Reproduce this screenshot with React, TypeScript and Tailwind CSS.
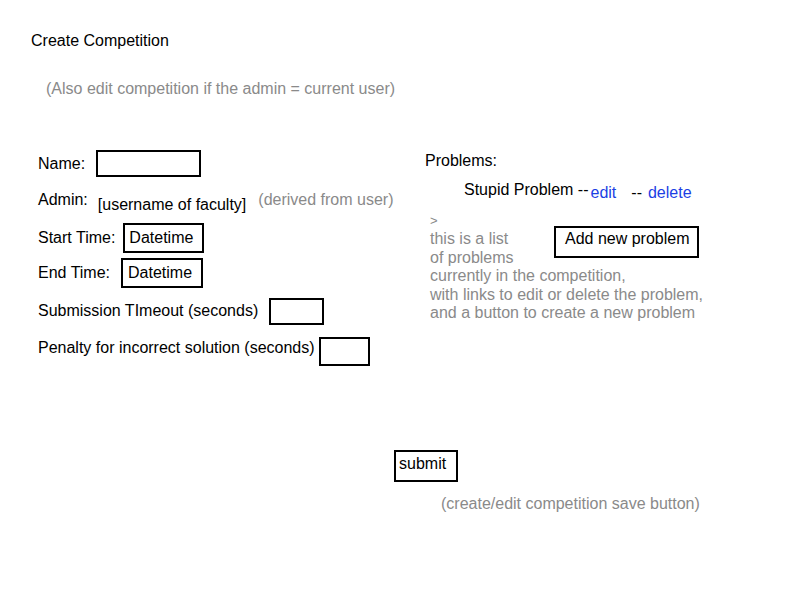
import React from "react";

function Box({ className = "", children }: { className?: string; children?: React.ReactNode }) {
  return <div className={`border-2 border-black shrink-0 ${className}`}>{children}</div>;
}

export default function App() {
  return (
    <div
      className="w-[800px] h-[600px] bg-white text-black text-[16px] leading-[18px] overflow-hidden whitespace-nowrap"
      style={{ fontFamily: '"Liberation Sans", Arial, sans-serif' }}
    >
      <div className="pt-[32px] pl-[31px]">Create Competition</div>
      <div className="mt-[30px] pl-[46px] text-[#8a8a8a]">
        (Also edit competition if the admin = current user)
      </div>

      <div className="mt-[52px] flex">
        {/* left column: form fields */}
        <div className="w-[425px] shrink-0 pl-[38px] flex flex-col">
          <div className="flex items-center h-[27px] gap-[11px]">
            <span>Name:</span>
            <Box className="w-[105px] h-[27px]" />
          </div>

          <div className="mt-[14px] flex items-start h-[23px]">
            <span>Admin:</span>
            <span className="ml-[10px] mt-[5px]">[username of faculty]</span>
            <span className="ml-[12px] text-[#8a8a8a]">(derived from user)</span>
          </div>

          <div className="mt-[9px] flex items-center h-[30px] gap-[8px]">
            <span>Start Time:</span>
            <Box className="w-[81px] h-[30px] pl-[4px] pt-[4px]">Datetime</Box>
          </div>

          <div className="mt-[5px] flex items-center h-[30px] gap-[11px]">
            <span>End Time:</span>
            <Box className="w-[82px] h-[30px] pl-[5px] pt-[4px]">Datetime</Box>
          </div>

          <div className="mt-[10px] flex items-start h-[27px] gap-[11px]">
            <span className="mt-[4px]">Submission TImeout (seconds)</span>
            <Box className="w-[55px] h-[27px]" />
          </div>

          <div className="mt-[12px] flex items-start h-[29px] gap-[4px]">
            <span className="mt-[2px]">Penalty for incorrect solution (seconds)</span>
            <Box className="w-[51px] h-[29px]" />
          </div>
        </div>

        {/* right column: problems list */}
        <div className="pt-[2px] flex flex-col">
          <div>Problems:</div>
          <div className="mt-[11px] pl-[39px] flex items-start">
            <span>Stupid Problem --</span>
            <span className="ml-[2px] mt-[3px] text-[#1b3fe4]">edit</span>
            <span className="ml-[15px] mt-[3px]">--</span>
            <span className="ml-[6px] mt-[3px] text-[#1b3fe4]">delete</span>
          </div>
          <div className="mt-[12px] pl-[5px] text-[#8a8a8a] text-[13px] leading-[14px]">&gt;</div>
          <div className="mt-[2px] pl-[5px] text-[#8a8a8a] leading-[18.5px]">
            <div className="flex items-start">
              <div className="w-[124px]">
                <div>this is a list</div>
                <div>of problems</div>
              </div>
              <Box className="-mt-[4px] w-[145px] h-[32px] pl-[9px] pt-[2px] text-black leading-[18px]">
                Add new problem
              </Box>
            </div>
            <div>currently in the competition,</div>
            <div>with links to edit or delete the problem,</div>
            <div>and a button to create a new problem</div>
          </div>
        </div>
      </div>

      <div className="mt-[84px] pl-[394px]">
        <Box className="w-[64px] h-[32px] pl-[3px] pt-[3px]">submit</Box>
      </div>
      <div className="mt-[13px] pl-[441px] text-[#8a8a8a]">(create/edit competition save button)</div>
    </div>
  );
}
